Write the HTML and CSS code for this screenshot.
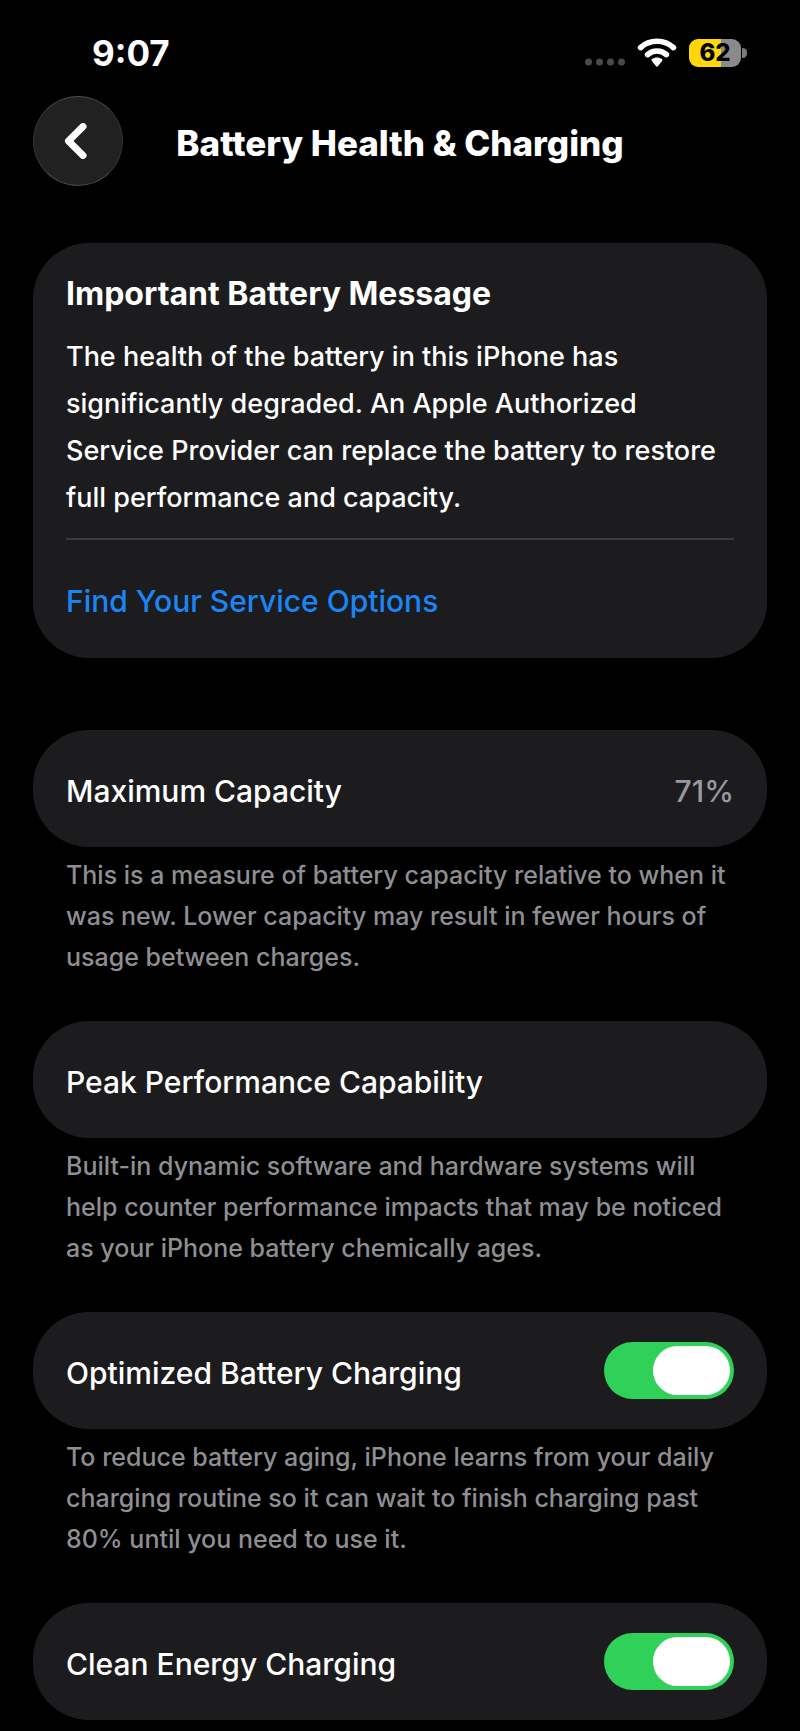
FILE: index.html
```html
<!DOCTYPE html>
<html lang="en">
  <head>
    <meta charset="utf-8" />
    <meta name="viewport" content="width=device-width,initial-scale=1.0" />
    <title>Battery Health &amp; Charging</title>
    <link rel="stylesheet" href="styles.css">
  </head>

  <body>
    <!-- Status bar -->
    <div class="status-bar">
      <span class="time">9:07</span>
      <div class="status-icons">
        <svg class="signal" width="40" height="8" viewBox="0 0 40 8" aria-hidden="true">
          <circle cx="3.5" cy="4" r="3.5" />
          <circle cx="14.5" cy="4" r="3.5" />
          <circle cx="25.5" cy="4" r="3.5" />
          <circle cx="36.5" cy="4" r="3.5" />
        </svg>
        <svg class="wifi" width="40" height="30" viewBox="0 0 40 30" aria-hidden="true">
          <path class="wifi-arc" d="M3.6 9.6C12.4 1.2 27.6 1.2 36.4 9.6" />
          <path class="wifi-arc" d="M10.6 16.6C15.8 11.8 24.2 11.8 29.4 16.6" />
          <path class="wifi-dot" d="M14.9 22.9C14.3 22.3 14.4 21.6 15 21.1C17.8 19 22.2 19 25 21.1C25.6 21.6 25.7 22.3 25.1 22.9L21.1 27.9C20.5 28.6 19.5 28.6 18.9 27.9Z" />
        </svg>
        <div class="battery">
          <div class="battery-body">62</div>
          <div class="battery-cap"></div>
        </div>
      </div>
    </div>

    <!-- Navigation -->
    <header class="nav">
      <button class="back" type="button" aria-label="Back">
        <svg width="24" height="36" viewBox="0 0 24 36" aria-hidden="true">
          <path d="M20 3.5L5.5 18L20 32.5" />
        </svg>
      </button>
      <h1>Battery Health &amp; Charging</h1>
    </header>

    <!-- Main -->
    <main>
      <section class="card message">
        <h2>Important Battery Message</h2>
        <p>
          The health of the battery in this iPhone has<br />
          significantly degraded. An Apple Authorized<br />
          Service Provider can replace the battery to restore<br />
          full performance and capacity.
        </p>
        <a class="service" href="#">Find Your Service Options</a>
      </section>

      <section class="group">
        <div class="card row">
          <span class="label">Maximum Capacity</span>
          <span class="value">71%</span>
        </div>
        <p class="note">
          This is a measure of battery capacity relative to when it<br />
          was new. Lower capacity may result in fewer hours of<br />
          usage between charges.
        </p>
      </section>

      <section class="group">
        <div class="card row">
          <span class="label">Peak Performance Capability</span>
        </div>
        <p class="note">
          Built-in dynamic software and hardware systems will<br />
          help counter performance impacts that may be noticed<br />
          as your iPhone battery chemically ages.
        </p>
      </section>

      <section class="group">
        <div class="card row">
          <label class="label" for="optimized">Optimized Battery Charging</label>
          <input class="switch" type="checkbox" role="switch" id="optimized" checked />
        </div>
        <p class="note">
          To reduce battery aging, iPhone learns from your daily<br />
          charging routine so it can wait to finish charging past<br />
          80% until you need to use it.
        </p>
      </section>

      <section class="group">
        <div class="card row">
          <label class="label" for="clean">Clean Energy Charging</label>
          <input class="switch" type="checkbox" role="switch" id="clean" checked />
        </div>
      </section>
    </main>
  </body>
</html>
```

FILE: styles.css
```css
* {
  box-sizing: border-box;
}
body {
  background: #000;
  color: #fff;
  margin: 0;
  font-family: Inter, "Liberation Sans", sans-serif;
  font-size: 30px;
  font-weight: 500;
  line-height: 40px;
}
h1,
h2,
p {
  margin: 0;
}

/* status bar */
.status-bar {
  display: flex;
  justify-content: space-between;
  align-items: center;
  padding: 33px 53px 23px 92px;
}
.time {
  font-size: 35px;
  font-weight: 700;
}
.status-icons {
  display: flex;
  align-items: center;
  gap: 12px;
}
.signal {
  align-self: flex-end;
  margin-bottom: 2px;
  fill: #4a4a4a;
}
.wifi-arc {
  fill: none;
  stroke: #fff;
  stroke-width: 5.6;
  stroke-linecap: round;
}
.wifi-dot {
  fill: #fff;
}
.battery {
  display: flex;
  align-items: center;
  gap: 1px;
}
.battery-body {
  width: 52px;
  height: 28px;
  border-radius: 9px;
  background: linear-gradient(to right, #ffd60a 62%, #8a8a8a 62%);
  color: #000;
  font-size: 24px;
  font-weight: 800;
  line-height: 28px;
  text-align: center;
}
.battery-cap {
  width: 5px;
  height: 10px;
  border-radius: 1px 5px 5px 1px;
  background: #7c7c7c;
}

/* navigation */
.nav {
  display: grid;
  grid-template-columns: 90px 1fr 90px;
  align-items: center;
  padding: 0 33px;
  margin-bottom: 57px;
}
.nav h1 {
  padding-top: 4px;
  font-size: 35px;
  font-weight: 800;
  text-align: center;
}
.back {
  display: flex;
  align-items: center;
  justify-content: center;
  width: 90px;
  height: 90px;
  padding: 0 6px 0 0;
  border: 1px solid #333;
  border-top-color: #4a4a4a;
  border-bottom-color: #4a4a4a;
  border-radius: 50%;
  background: #212121;
  cursor: pointer;
}
.back path {
  fill: none;
  stroke: #fff;
  stroke-width: 7;
  stroke-linecap: round;
  stroke-linejoin: round;
}

/* cards */
main {
  padding: 0 33px 10px;
}
.card {
  border-radius: 56px;
  background: #1c1c1e;
  padding: 0 33px;
}
.message {
  padding-top: 31px;
  margin-bottom: 72px;
}
.message h2 {
  font-size: 32px;
  font-weight: 700;
}
.message p {
  padding: 19px 0 17px;
  border-bottom: 2px solid #3a3a3c;
  font-size: 27px;
  line-height: 47px;
}
.service {
  display: block;
  padding: 41px 0 37px;
  color: #1a85f5;
  text-decoration: none;
}
.row {
  display: flex;
  justify-content: space-between;
  align-items: center;
  min-height: 117px;
}
.label,
.value {
  padding-top: 4px;
}
.value {
  color: #98989f;
}
.note {
  padding: 8px 33px 43px;
  color: #8e8e93;
  font-size: 25px;
  line-height: 41px;
}

/* switch */
.switch {
  appearance: none;
  display: flex;
  width: 130px;
  height: 57px;
  margin: 0;
  padding: 4px;
  border-radius: 29px;
  background: #3a3a3c;
  cursor: pointer;
}
.switch::before {
  content: "";
  width: 77px;
  border-radius: 25px;
  background: #fff;
}
.switch:checked {
  justify-content: flex-end;
  background: #30d158;
}
```
